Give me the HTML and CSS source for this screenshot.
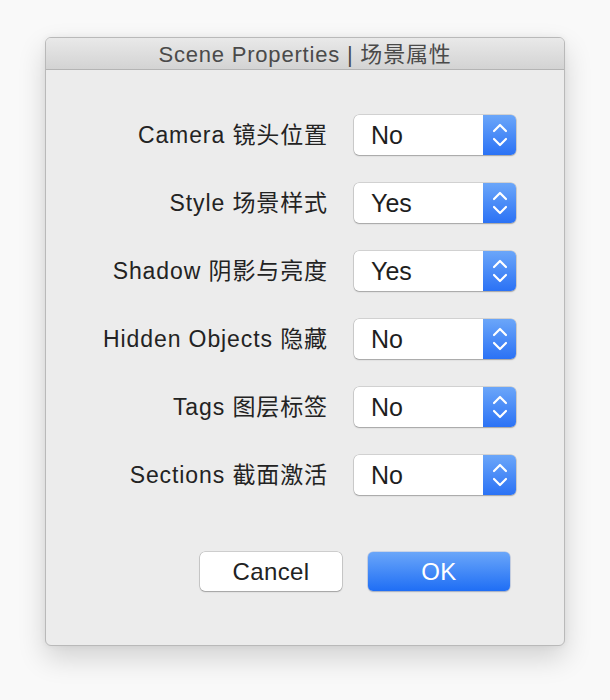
FILE: index.html
```html
<!DOCTYPE html>
<html lang="zh">
<head>
<meta charset="utf-8">
<title>Scene Properties</title>
<link rel="stylesheet" href="styles.css">
</head>
<body>
<div class="window">
  <div class="titlebar">Scene Properties | 场景属性</div>
  <div class="content">
    <div class="rows">
      <div class="label">Camera 镜头位置</div>
      <div class="popup"><span class="value">No</span><span class="stepper"><svg width="16" height="26" viewBox="0 0 16 26"><path d="M2 9 L8 3 L14 9" /><path d="M2 17 L8 23 L14 17" /></svg></span></div>
      <div class="label">Style 场景样式</div>
      <div class="popup"><span class="value">Yes</span><span class="stepper"><svg width="16" height="26" viewBox="0 0 16 26"><path d="M2 9 L8 3 L14 9" /><path d="M2 17 L8 23 L14 17" /></svg></span></div>
      <div class="label">Shadow 阴影与亮度</div>
      <div class="popup"><span class="value">Yes</span><span class="stepper"><svg width="16" height="26" viewBox="0 0 16 26"><path d="M2 9 L8 3 L14 9" /><path d="M2 17 L8 23 L14 17" /></svg></span></div>
      <div class="label">Hidden Objects 隐藏</div>
      <div class="popup"><span class="value">No</span><span class="stepper"><svg width="16" height="26" viewBox="0 0 16 26"><path d="M2 9 L8 3 L14 9" /><path d="M2 17 L8 23 L14 17" /></svg></span></div>
      <div class="label">Tags 图层标签</div>
      <div class="popup"><span class="value">No</span><span class="stepper"><svg width="16" height="26" viewBox="0 0 16 26"><path d="M2 9 L8 3 L14 9" /><path d="M2 17 L8 23 L14 17" /></svg></span></div>
      <div class="label">Sections 截面激活</div>
      <div class="popup"><span class="value">No</span><span class="stepper"><svg width="16" height="26" viewBox="0 0 16 26"><path d="M2 9 L8 3 L14 9" /><path d="M2 17 L8 23 L14 17" /></svg></span></div>
    </div>
    <div class="buttons">
      <button class="btn cancel">Cancel</button>
      <button class="btn ok">OK</button>
    </div>
  </div>
</div>
</body>
</html>
```

FILE: styles.css
```css
html, body {
  margin: 0;
  padding: 0;
}
body {
  width: 610px;
  height: 700px;
  background: #f9f9f9;
  font-family: "Liberation Sans", "Noto Sans CJK SC", sans-serif;
  color: #222;
  padding-top: 37px;
  padding-left: 45px;
  box-sizing: border-box;
}
.window {
  width: 520px;
  height: 609px;
  box-sizing: border-box;
  background: #ececec;
  border: 1px solid #b9b9b9;
  border-radius: 6px;
  overflow: hidden;
  box-shadow: 0 12px 28px rgba(0,0,0,0.16), 0 0 6px rgba(0,0,0,0.06);
  display: flex;
  flex-direction: column;
}
.titlebar {
  height: 31px;
  flex: none;
  background: linear-gradient(#e9e9e9, #d3d3d3);
  border-bottom: 1px solid #b4b4b4;
  text-align: center;
  font-size: 22px;
  line-height: 34px;
  color: #4a4a4a;
  letter-spacing: 0.8px;
}
.content {
  padding: 45px 48px 0 0;
}
.rows {
  display: grid;
  grid-template-columns: 1fr 162px;
  column-gap: 26px;
  row-gap: 28px;
  align-items: center;
}
.label {
  text-align: right;
  font-size: 23px;
  line-height: 38px;
  letter-spacing: 0.9px;
  color: #232323;
}
.popup {
  height: 40px;
  box-sizing: border-box;
  background: #fff;
  border-radius: 5px;
  box-shadow: 0 0 0 0.5px rgba(0,0,0,0.22), 0 1px 1.5px rgba(0,0,0,0.22);
  display: flex;
  overflow: hidden;
}
.value {
  flex: 1;
  padding-left: 17px;
  font-size: 25px;
  line-height: 40px;
  color: #1e1e1e;
}
.stepper {
  width: 33px;
  background: linear-gradient(#6ba6f9, #2b72f5);
  display: flex;
  align-items: center;
  justify-content: center;
}
.stepper svg path {
  fill: none;
  stroke: #fff;
  stroke-width: 2.2;
  stroke-linecap: round;
  stroke-linejoin: round;
}
.buttons {
  display: flex;
  justify-content: flex-end;
  gap: 26px;
  margin-top: 57px;
  padding-right: 6px;
}
.btn {
  width: 142px;
  height: 39px;
  border-radius: 5px;
  font-family: "Liberation Sans", sans-serif;
  font-size: 24px;
  letter-spacing: 0.4px;
  padding: 0;
}
.cancel {
  background: #fff;
  color: #222;
  border: none;
  box-shadow: 0 0 0 0.5px rgba(0,0,0,0.25), 0 1px 1.5px rgba(0,0,0,0.22);
}
.ok {
  color: #fff;
  border: none;
  background: linear-gradient(#6aa6f9, #1f6ef5);
  box-shadow: 0 0 0 0.5px rgba(20,80,200,0.3), 0 1px 1.5px rgba(0,0,0,0.2);
}
```
